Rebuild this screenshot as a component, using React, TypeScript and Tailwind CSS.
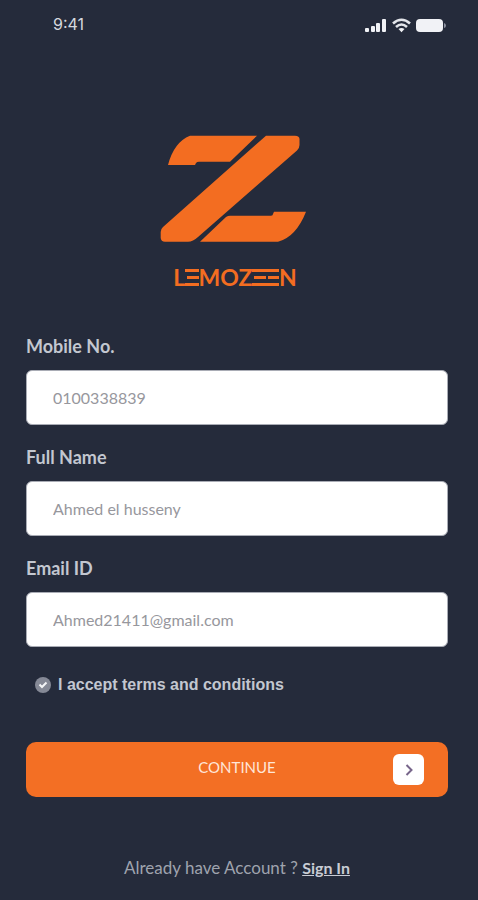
import React from "react";

const fields = [
  { id: "mobile", label: "Mobile No.", type: "tel", value: "0100338839" },
  { id: "name", label: "Full Name", type: "text", value: "Ahmed el husseny" },
  { id: "email", label: "Email ID", type: "email", value: "Ahmed21411@gmail.com" },
];

function StatusBar() {
  return (
    <header className="flex h-12 items-center justify-between pr-8 pl-[53px]">
      <span className="font-['Inter',sans-serif] text-base text-[#d5d8de]">9:41</span>
      <svg className="mt-1 h-4 w-[82px]" viewBox="0 0 82 16" fill="#f1f2f6" aria-hidden="true">
        <rect x="1" y="10" width="4" height="4" rx="1" />
        <rect x="7" y="8" width="4" height="6" rx="1" />
        <rect x="12" y="5" width="4" height="9" rx="1" />
        <rect x="18" y="1" width="4" height="13" rx="1" />
        <g fill="none" stroke="#e4e6eb" strokeWidth="2.6">
          <path d="M29 5.5Q37.500 -2 46 5.500" />
          <path d="M32 9Q37.500 4 43 9" />
        </g>
        <path d="M34.500 11Q37.500 8.800 40.500 11L37.500 14.200Z" />
        <rect x="52" y="1" width="27" height="13" rx="4" />
        <path d="M80 5q2 0.500 2 2.500t-2 2.500z" fill="#8c91a0" />
      </svg>
    </header>
  );
}

/* The wordmark's E has no stem: three plain bars lie over the letter. */
function StencilE() {
  return (
    <span className="relative inline-block before:absolute before:inset-x-0 before:top-2 before:h-[17px] before:border-y-3 before:border-[#f36d21] before:bg-[#252b3b] after:absolute after:right-0 after:left-0.5 after:top-[15px] after:h-[3px] after:bg-[#f36d21]">
      E
    </span>
  );
}

function Logo() {
  return (
    <div className="mt-[87px] flex flex-col items-center text-[#f36d21]">
      <svg className="mr-3 h-[108px] w-[148px]" viewBox="-1 0 148 108" fill="currentColor" aria-hidden="true">
        <path d="M30 .7H97L70 26.700H39Q37 26.700 36 28L35 30H8Q14 7 30 .7Z" />
        <path d="M106 .7H135Q140 .7 139.500 5V10Q139.500 13 137 15.500L38 102Q33 106.700 28 106.700H5Q1 106.700 .7 103V97Q.7 94 3 92Z" />
        <path d="M40 106.700L66 82Q68 80.700 70 80.700H111Q113 80.700 113 79L114 76.700H146Q136 102 118 106.700Z" />
      </svg>
      <p className="mt-[18px] mr-2 font-['Lato',sans-serif] text-[23px] leading-8 font-bold">
        L<StencilE />MOZ<StencilE /><StencilE />N
      </p>
    </div>
  );
}

export default function App() {
  return (
    <main className="min-h-screen bg-[#252b3b] font-['Lato',sans-serif]">
      <StatusBar />
      <Logo />
      <form className="mt-[41px] pr-[30px] pl-[26px]" onSubmit={(e) => e.preventDefault()}>
        <div className="flex flex-col gap-5">
          {fields.map((f) => (
            <div key={f.id} className="flex flex-col gap-3">
              <label htmlFor={f.id} className="text-lg leading-6 font-bold text-[#c3c7d0]">
                {f.label}
              </label>
              <input
                id={f.id}
                type={f.type}
                defaultValue={f.value}
                className="h-[55px] w-full rounded-md border border-[#a9acb5] bg-white px-[26px] text-base text-[#97979d] outline-none"
              />
            </div>
          ))}
        </div>
        <label className="mt-[26px] ml-[9px] flex items-center gap-[7px] font-['Liberation_Sans',Arial,sans-serif] text-base leading-6 font-bold text-[#c3c7d0]">
          <span className="grid size-4 place-items-center">
            <input type="checkbox" defaultChecked className="col-start-1 row-start-1 size-4 appearance-none rounded-full bg-[#858996]" />
            <svg className="pointer-events-none col-start-1 row-start-1 size-4" viewBox="0 0 16 16" fill="none" stroke="#f4f5f7" strokeWidth="2" aria-hidden="true">
              <path d="M4.500 7.500L7 10L11.500 5.500" />
            </svg>
          </span>
          I accept terms and conditions
        </label>
        <button type="submit" className="mt-[45px] grid h-[55px] w-full grid-cols-[1fr_auto_1fr] items-center rounded-[10px] bg-[#f36f24] px-6 text-[15px] text-[#ffe6d8]">
          <span className="col-start-2 pb-1">CONTINUE</span>
          <span className="grid size-[31px] place-items-center justify-self-end rounded-md bg-white">
            <svg className="size-4" viewBox="0 0 16 16" fill="none" stroke="#77658a" strokeWidth="2" aria-hidden="true">
              <path d="M5.500 3L10.500 8L5.500 13" />
            </svg>
          </span>
        </button>
      </form>
      <p className="mt-[59px] pr-1 pb-5 text-center text-[17px] leading-6 text-[#9fa3ae]">
        Already have Account ?{" "}
        <a href="#sign-in" className="text-base font-bold text-[#c8cbd4] underline">Sign In</a>
      </p>
    </main>
  );
}
